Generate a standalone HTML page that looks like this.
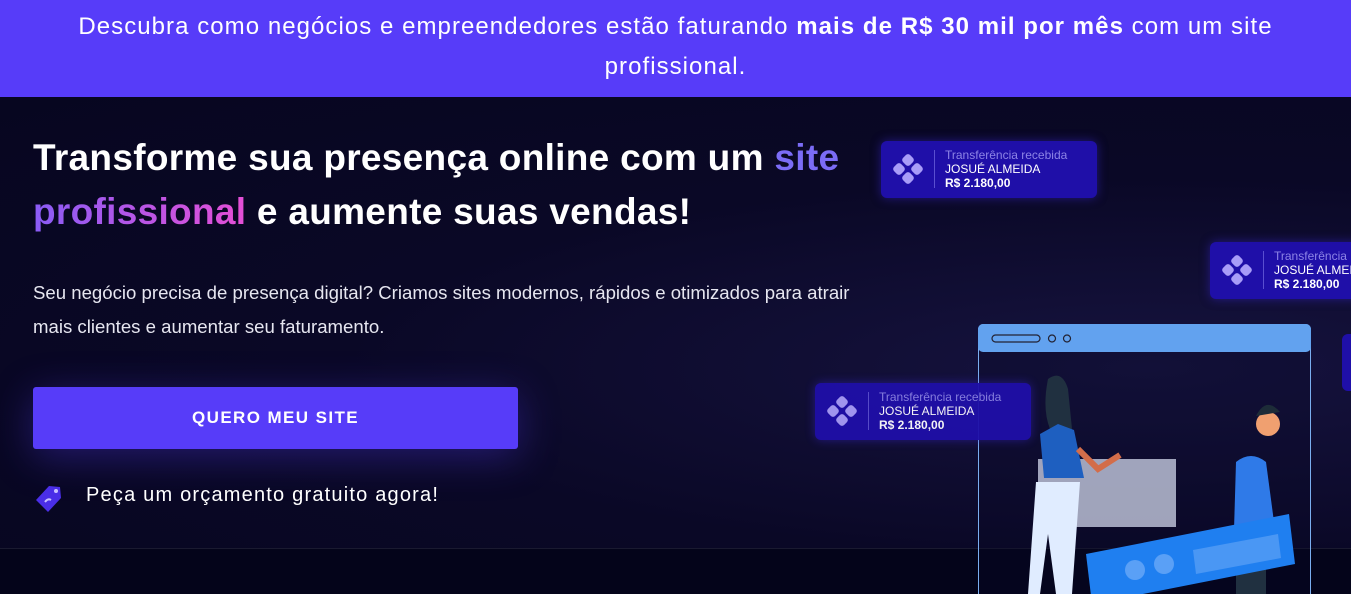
<!DOCTYPE html>
<html><head><meta charset="utf-8"><style>
*{margin:0;padding:0;box-sizing:border-box}
body{width:1351px;height:594px;overflow:hidden;background:#07061f;font-family:"Liberation Sans",sans-serif;position:relative}
.banner{position:absolute;left:0;top:0;width:1351px;height:97px;background:#573cf9;color:#fff;text-align:center;font-size:24px;letter-spacing:1.05px;line-height:40px;padding-top:7px}
.hero{position:absolute;left:0;top:97px;width:1351px;height:451px;background:radial-gradient(ellipse at 85% 60%,#16133f 0%,#0a0826 50%,#070620 100%)}
.bottom{position:absolute;left:0;top:548px;width:1351px;height:46px;background:#04041a;border-top:1px solid #1a1a30}
h1{position:absolute;left:33px;top:131px;color:#fff;font-size:37px;line-height:54px;font-weight:bold;letter-spacing:0.3px;width:900px;white-space:nowrap}
.g1{color:#7b6cf6}
.g2{background:linear-gradient(90deg,#8a5cf6,#e54fd6);-webkit-background-clip:text;color:transparent}
p.sub{position:absolute;left:33px;top:276px;color:#e6e6f0;font-size:18.6px;line-height:34px;width:850px}
.btn{position:absolute;left:33px;top:387px;width:485px;height:62px;background:#573cf9;border-radius:3px;color:#fff;font-weight:bold;font-size:17px;letter-spacing:1.4px;text-align:center;line-height:62px;box-shadow:0 8px 40px rgba(87,60,249,.35)}
.tagt{position:absolute;left:86px;top:484px;color:#fff;font-size:20px;letter-spacing:1.2px}
.card{position:absolute;width:216px;height:57px;background:#1f0fa8;border-radius:6px;box-shadow:0 0 10px rgba(60,40,220,.5)}
.card .ic{position:absolute;left:11px;top:12px}
.card .ln{position:absolute;left:53px;top:9px;width:1px;height:38px;background:#5a4fd0}
.card .t{position:absolute;left:64px;top:7px;font-size:12px;line-height:14px;color:#fff;white-space:nowrap}
.card .t span{color:#8d84e6}
</style></head><body>
<div class="banner">Descubra como negócios e empreendedores estão faturando <b>mais de R$ 30 mil por mês</b> com um site<br>profissional.</div>
<div class="hero"></div>
<div class="bottom"></div>
<h1>Transforme sua presença online com um <span class="g1">site</span><br><span class="g2">profissional</span> e aumente suas vendas!</h1>
<p class="sub">Seu negócio precisa de presença digital? Criamos sites modernos, rápidos e otimizados para atrair mais clientes e aumentar seu faturamento.</p>
<div class="btn">QUERO MEU SITE</div>
<svg style="position:absolute;left:32px;top:482px" width="32" height="32" viewBox="0 0 32 32"><path d="M4 18 L17 4 L28 5 L29 16 L16 30 Z" fill="#4a2ee8"/><circle cx="24" cy="9" r="2" fill="#c8c0ff"/><path d="M13 20 q3-4 6-2" stroke="#c8c0ff" stroke-width="2" fill="none"/></svg>
<div class="tagt">Peça um orçamento gratuito agora!</div>

<svg style="position:absolute;left:978px;top:324px" width="334" height="270" viewBox="0 0 334 270">
<rect x="0.5" y="0.5" width="332" height="280" rx="5" fill="rgba(10,10,40,.3)" stroke="#7aaef0" stroke-width="1"/>
<rect x="0" y="0" width="333" height="28" rx="5" fill="#62a2ef"/>
<rect x="14" y="11" width="48" height="7" rx="3.5" fill="none" stroke="#223" stroke-width="1.2"/>
<circle cx="74" cy="14.5" r="3.5" fill="none" stroke="#223" stroke-width="1.2"/>
<circle cx="89" cy="14.5" r="3.5" fill="none" stroke="#223" stroke-width="1.2"/>
<rect x="60" y="135" width="138" height="68" fill="#c5cbe0" opacity=".8"/>
<path d="M70 55 q14-10 20 10 l4 40 q-10 5-22 0 q-8-20-2-50 z" fill="#203040"/>
<path d="M62 110 l18 -10 l16 6 l10 48 l-40 0 z" fill="#1e5fc0"/>
<path d="M58 158 l44 0 l-8 112 l-16 0 l-8-60 l-8 60 l-12 0 z" fill="#e0ecff"/>
<path d="M100 125 l20 20 l22-14" stroke="#d36d4a" stroke-width="6" fill="none"/>
<circle cx="290" cy="100" r="12" fill="#f0a070"/>
<path d="M278 92 q10-20 24-4" fill="#1d2c38"/>
<path d="M258 138 q15-12 30 0 l8 60 l-40 8 z" fill="#2f7ae8"/>
<path d="M258 220 l30 0 l0 50 l-30 0 z" fill="#203040"/>
<path d="M108 230 l203 -40 l6 50 l-203 40 z" fill="#1f7ff0"/>
<circle cx="157" cy="246" r="10" fill="#5aa0f6"/><circle cx="186" cy="240" r="10" fill="#5aa0f6"/>
<path d="M215 226 l85-16 l3 24 l-85 16 z" fill="#4a97f4"/>
</svg>

<div class="card" style="left:881px;top:141px"><svg class="ic" width="32" height="32" viewBox="0 0 32 32" fill="#a89cf8"><rect x="11" y="2" width="10" height="10" rx="3" transform="rotate(45 16 7)"/><rect x="2" y="11" width="10" height="10" rx="3" transform="rotate(45 7 16)"/><rect x="20" y="11" width="10" height="10" rx="3" transform="rotate(45 25 16)"/><rect x="11" y="20" width="10" height="10" rx="3" transform="rotate(45 16 25)"/></svg><div class="ln"></div><div class="t"><span>Transferência recebida</span><br>JOSUÉ ALMEIDA<br><b>R$ 2.180,00</b></div></div>
<div class="card" style="left:1210px;top:242px"><svg class="ic" width="32" height="32" viewBox="0 0 32 32" fill="#a89cf8"><rect x="11" y="2" width="10" height="10" rx="3" transform="rotate(45 16 7)"/><rect x="2" y="11" width="10" height="10" rx="3" transform="rotate(45 7 16)"/><rect x="20" y="11" width="10" height="10" rx="3" transform="rotate(45 25 16)"/><rect x="11" y="20" width="10" height="10" rx="3" transform="rotate(45 16 25)"/></svg><div class="ln"></div><div class="t"><span>Transferência recebida</span><br>JOSUÉ ALMEIDA<br><b>R$ 2.180,00</b></div></div>
<div class="card" style="left:815px;top:383px;opacity:.95"><svg class="ic" width="32" height="32" viewBox="0 0 32 32" fill="#a89cf8"><rect x="11" y="2" width="10" height="10" rx="3" transform="rotate(45 16 7)"/><rect x="2" y="11" width="10" height="10" rx="3" transform="rotate(45 7 16)"/><rect x="20" y="11" width="10" height="10" rx="3" transform="rotate(45 25 16)"/><rect x="11" y="20" width="10" height="10" rx="3" transform="rotate(45 16 25)"/></svg><div class="ln"></div><div class="t"><span>Transferência recebida</span><br>JOSUÉ ALMEIDA<br><b>R$ 2.180,00</b></div></div>
<div style="position:absolute;left:1342px;top:334px;width:20px;height:57px;background:#1f0fa8;border-radius:6px"></div>
</body></html>
